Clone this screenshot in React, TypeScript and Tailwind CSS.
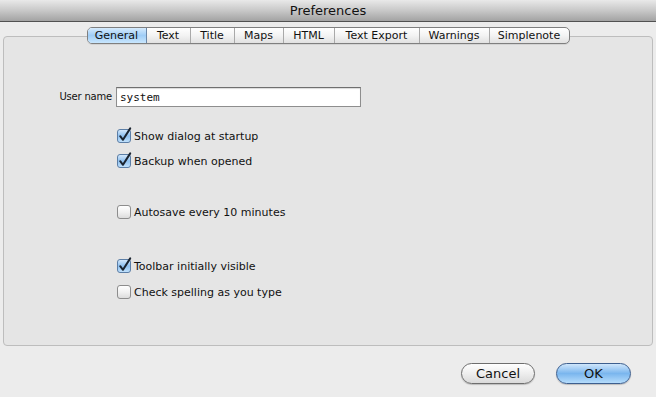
import React from "react";

const font = { fontFamily: '"DejaVu Sans", "Liberation Sans", sans-serif' };

function Check({ checked }: { checked: boolean }) {
  return (
    <span className="relative inline-block w-[14px] h-[14px] shrink-0">
      <span
        className={
          checked
            ? "absolute inset-0 rounded-[3px] border border-[#5b7ea6] bg-gradient-to-b from-[#d4e8fb] via-[#8ec0ef] to-[#bfe0fb]"
            : "absolute inset-0 rounded-[3px] border border-[#8d8d8d] bg-gradient-to-b from-[#ffffff] via-[#f1f1f1] to-[#dcdcdc]"
        }
      />
      {checked && (
        <svg className="absolute left-0 top-0 overflow-visible" width="14" height="14" viewBox="0 0 14 14">
          <path d="M3.2 7.2 L6 10.8 L13.2 -0.6" fill="none" stroke="#1b2430" strokeWidth="2" strokeLinejoin="round" strokeLinecap="round" />
        </svg>
      )}
    </span>
  );
}

function CheckRow({ checked, label, mt }: { checked: boolean; label: string; mt: string }) {
  return (
    <div className={`flex items-center h-[14px] pl-[113px] ${mt}`}>
      <Check checked={checked} />
      <span className="ml-[3px] text-[11px] text-[#111] leading-none">{label}</span>
    </div>
  );
}

const tabs = ["General", "Text", "Title", "Maps", "HTML", "Text Export", "Warnings", "Simplenote"];
const tabW = [59, 44, 44, 49, 51, 85, 70, 79];

export default function App() {
  return (
    <div className="w-[656px] h-[397px] bg-[#ececec] flex flex-col overflow-hidden" style={font}>
      <div className="h-[22px] shrink-0 bg-gradient-to-b from-[#e9e9e9] via-[#c8c8c8] to-[#a3a3a3] border-b border-[#515151] flex items-center justify-center">
        <span className="text-[13px] text-[#111] leading-none">Preferences</span>
      </div>
      <div className="px-[3px] flex flex-col">
        <div className="relative z-10 flex justify-center mt-[5px] h-[17px]">
          <div className="flex h-[17px] rounded-[5px] border border-[#7f7f7f] overflow-hidden bg-gradient-to-b from-[#ffffff] via-[#f3f3f3] to-[#e1e1e1] shadow-[0_1px_0_rgba(0,0,0,0.08)]">
            {tabs.map((t, i) => (
              <div
                key={t}
                style={{ width: tabW[i] }}
                className={
                  i === 0
                    ? "flex items-center justify-center text-[11px] leading-none text-[#111] bg-gradient-to-b from-[#d6ebfd] via-[#9fcdf7] to-[#c8e6fd] border-r border-[#6b87a8]"
                    : "flex items-center justify-center text-[11px] leading-none text-[#111] border-r border-[#a9a9a9] last:border-r-0"
                }
              >
                {t}
              </div>
            ))}
          </div>
        </div>
        <div className="-mt-[8px] h-[310px] rounded-[4px] border border-[#bdbdbd] bg-[#e5e5e5] flex flex-col">
          <div className="flex items-center mt-[50px] h-[20px]">
            <span className="w-[108px] text-right text-[10px] tracking-[-0.2px] text-[#111] leading-none">User name</span>
            <div className="ml-[4px] w-[245px] h-[20px] bg-white border border-[#8e8e8e] border-t-[#6f6f6f] flex items-center pl-[3px] shadow-[inset_0_1px_1px_rgba(0,0,0,0.15)]">
              <span className="text-[11px] text-[#111] leading-none" style={{ fontFamily: '"DejaVu Sans Mono", monospace' }}>system</span>
            </div>
          </div>
          <CheckRow checked label="Show dialog at startup" mt="mt-[22px]" />
          <CheckRow checked label="Backup when opened" mt="mt-[11px]" />
          <CheckRow checked={false} label="Autosave every 10 minutes" mt="mt-[37px]" />
          <CheckRow checked label="Toolbar initially visible" mt="mt-[40px]" />
          <CheckRow checked={false} label="Check spelling as you type" mt="mt-[12px]" />
        </div>
      </div>
      <div className="flex justify-end gap-[21px] pr-[25px] mt-[17px]">
        <button className="w-[74px] h-[21px] rounded-full border border-[#6e6e6e] bg-gradient-to-b from-[#ffffff] via-[#eeeeee] to-[#dadada] text-[13px] text-[#111] leading-none shadow-[0_1px_1px_rgba(0,0,0,0.2)]">
          Cancel
        </button>
        <button className="w-[75px] h-[21px] rounded-full border border-[#3d5f8f] bg-gradient-to-b from-[#cfe6fb] via-[#7ab6ee] to-[#b5dcfb] text-[13px] text-[#111] leading-none shadow-[0_1px_1px_rgba(0,0,0,0.2)]">
          OK
        </button>
      </div>
    </div>
  );
}
